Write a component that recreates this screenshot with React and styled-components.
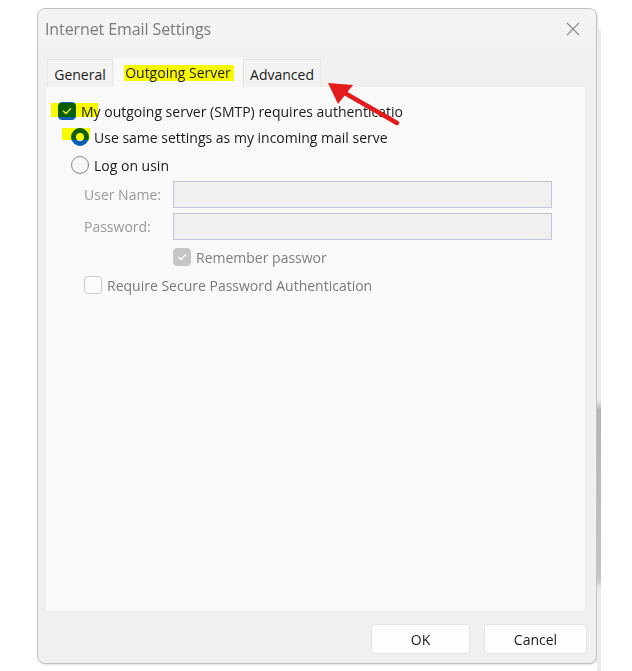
import React from "react";
import styled, { createGlobalStyle } from "styled-components";

const GlobalStyle = createGlobalStyle`
  html, body {
    margin: 0;
    padding: 0;
    background: #ffffff;
  }
  body {
    font-family: "Open Sans", "Noto Sans", sans-serif;
    font-size: 14px;
    color: #1b1b1b;
  }
`;

const Page = styled.div`
  position: relative;
  width: 632px;
  height: 671px;
  padding: 8px 0 0 37px;
  box-sizing: border-box;
  display: flex;
  align-items: flex-start;
`;

const Dialog = styled.div`
  width: 560px;
  height: 656px;
  box-sizing: border-box;
  border: 1px solid #c2c2c2;
  border-radius: 8px;
  background: #f0f0f0;
  overflow: hidden;
  display: flex;
  flex-direction: column;
  box-shadow: 1px 1px 2px rgba(0, 0, 0, 0.12);
`;

const Backdrop = styled.div`
  width: 4px;
  height: 641px;
  margin-top: 22px;
  background: linear-gradient(
    to bottom,
    #ececec 0,
    #ececec 370px,
    #b5b5b5 380px,
    #c4c4c4 548px,
    #ececec 560px
  );
`;

const TitleBar = styled.div`
  height: 39px;
  flex-shrink: 0;
  background: #f3f3f3;
  display: flex;
  align-items: center;
  justify-content: space-between;
  padding: 0 16px 0 7px;
`;

const Title = styled.span`
  font-size: 16px;
  color: #7a7a7a;
  letter-spacing: -0.1px;
`;

const Body = styled.div`
  flex: 1;
  display: flex;
  flex-direction: column;
  padding: 9px 10px 0 7px;
  min-height: 0;
`;

const TabRow = styled.div`
  height: 30px;
  flex-shrink: 0;
  display: flex;
  align-items: flex-end;
  padding-left: 2px;
`;

const Tab = styled.div`
  position: relative;
  width: ${(p) => p.$w}px;
  height: ${(p) => (p.$active ? 30 : 28)}px;
  box-sizing: border-box;
  display: flex;
  align-items: center;
  justify-content: center;
  padding-top: ${(p) => (p.$active ? 0 : 2)}px;
  background: ${(p) => (p.$active ? "#f9f9f9" : "#f3f3f3")};
  border: 1px solid ${(p) => (p.$active ? "#f3f3f3" : "#e6e6e6")};
  border-bottom: none;
  color: #1b1b1b;
  font-size: 14px;
  z-index: ${(p) => (p.$active ? 2 : 1)};
`;

const Panel = styled.div`
  flex: 1;
  background: #f9f9f9;
  border: 1px solid #ededed;
  display: flex;
  flex-direction: column;
  padding: 13px 0 0 12px;
  margin-top: -1px;
`;

const Row = styled.div`
  position: relative;
  display: flex;
  align-items: center;
  height: ${(p) => p.$h || 22}px;
  margin-top: ${(p) => p.$gap || 0}px;
  padding-left: ${(p) => p.$indent || 0}px;
  gap: 5px;
  flex-shrink: 0;
`;

const Label = styled.span`
  display: inline-block;
  white-space: nowrap;
  overflow: hidden;
  width: ${(p) => (p.$clip ? `${p.$clip}px` : "auto")};
  color: ${(p) => p.$color || "#1b1b1b"};
  font-size: 14px;
`;

const FieldLabel = styled.span`
  width: 84px;
  flex-shrink: 0;
  color: #9a9a9a;
  font-size: 14px;
`;

const Input = styled.div`
  width: 379px;
  height: 27px;
  box-sizing: border-box;
  background: #f0f0f0;
  border: 1px solid #bcc6d6;
`;

const Box = styled.span`
  width: 18px;
  height: 18px;
  box-sizing: border-box;
  border-radius: 4px;
  flex-shrink: 0;
  display: inline-flex;
  align-items: center;
  justify-content: center;
  background: ${(p) =>
    p.$state === "checked" ? "#0b5fb3" : p.$state === "disabled" ? "#c6c6c6" : "#fbfbfb"};
  border: 1px solid
    ${(p) =>
      p.$state === "checked" ? "#0b5fb3" : p.$state === "disabled" ? "#c6c6c6" : "#c9c9c9"};
`;

const Radio = styled.span`
  width: 18px;
  height: 18px;
  box-sizing: border-box;
  border-radius: 50%;
  flex-shrink: 0;
  display: inline-flex;
  align-items: center;
  justify-content: center;
  background: ${(p) => (p.$on ? "#0b5fb3" : "#f6f6f6")};
  border: 1px solid ${(p) => (p.$on ? "#0b5fb3" : "#868686")};

  &::after {
    content: "";
    display: ${(p) => (p.$on ? "block" : "none")};
    width: 8px;
    height: 8px;
    border-radius: 50%;
    background: #ffffff;
  }
`;

const Highlight = styled.span`
  position: absolute;
  left: ${(p) => p.$x}px;
  top: ${(p) => p.$y}px;
  width: ${(p) => p.$w}px;
  height: ${(p) => p.$h}px;
  background: #ffff00;
  mix-blend-mode: multiply;
  pointer-events: none;
`;

const Footer = styled.div`
  flex-shrink: 0;
  display: flex;
  justify-content: flex-end;
  gap: 14px;
  padding: 12px 9px 9px 0;
`;

const Button = styled.button`
  width: ${(p) => p.$w}px;
  height: 30px;
  background: #fdfdfd;
  border: 1px solid #e3e3e3;
  border-radius: 4px;
  font-family: "Open Sans", "Noto Sans", sans-serif;
  font-size: 14px;
  color: #1b1b1b;
  padding: 0;
`;

const Arrow = styled.svg`
  position: absolute;
  left: 0;
  top: 0;
  pointer-events: none;
`;

const Check = ({ color = "#ffffff" }) => (
  <svg width="12" height="12" viewBox="0 0 12 12">
    <path d="M2.5 6.3 L5 8.6 L9.6 3.6" fill="none" stroke={color} strokeWidth="1.3" strokeLinecap="round" strokeLinejoin="round" />
  </svg>
);

const CloseIcon = () => (
  <svg width="14" height="14" viewBox="0 0 14 14">
    <path d="M1 1 L13 13 M13 1 L1 13" stroke="#8a8a8a" strokeWidth="1.1" />
  </svg>
);

export default function App() {
  return (
    <>
      <GlobalStyle />
      <Page>
        <Dialog>
          <TitleBar>
            <Title>Internet Email Settings</Title>
            <CloseIcon />
          </TitleBar>
          <Body>
            <TabRow>
              <Tab $w={66}>General</Tab>
              <Tab $w={130} $active>
                Outgoing Server
                <Highlight $x={10} $y={7} $w={110} $h={16} />
              </Tab>
              <Tab $w={78}>Advanced</Tab>
            </TabRow>
            <Panel>
              <Row $h={22}>
                <Box $state="checked">
                  <Check />
                </Box>
                <Label $clip={328}>My outgoing server (SMTP) requires authenticatio</Label>
                <Highlight $x={-7} $y={3} $w={47} $h={14} />
              </Row>
              <Row $h={22} $gap={4} $indent={13}>
                <Radio $on />
                <Label $clip={294}>Use same settings as my incoming mail serve</Label>
                <Highlight $x={4} $y={2} $w={28} $h={12} />
              </Row>
              <Row $h={22} $gap={6} $indent={13}>
                <Radio />
                <Label $clip={79}>Log on usin</Label>
              </Row>
              <Row $h={27} $gap={5} $indent={26}>
                <FieldLabel>User Name:</FieldLabel>
                <Input />
              </Row>
              <Row $h={27} $gap={5} $indent={26}>
                <FieldLabel>Password:</FieldLabel>
                <Input />
              </Row>
              <Row $h={22} $gap={6} $indent={115}>
                <Box $state="disabled">
                  <Check />
                </Box>
                <Label $clip={131} $color="#7e7e7e">Remember passwor</Label>
              </Row>
              <Row $h={22} $gap={6} $indent={26}>
                <Box $state="off" />
                <Label $color="#7a7a7a">Require Secure Password Authentication</Label>
              </Row>
            </Panel>
          </Body>
          <Footer>
            <Button $w={99}>OK</Button>
            <Button $w={103}>Cancel</Button>
          </Footer>
        </Dialog>
        <Backdrop />
        <Arrow width="632" height="671" viewBox="0 0 632 671">
          <line x1="397" y1="123" x2="343" y2="92" stroke="#e31b1b" strokeWidth="4.5" strokeLinecap="round" />
          <polygon points="328,83 353,85 338,104" fill="#e31b1b" />
        </Arrow>
      </Page>
    </>
  );
}
